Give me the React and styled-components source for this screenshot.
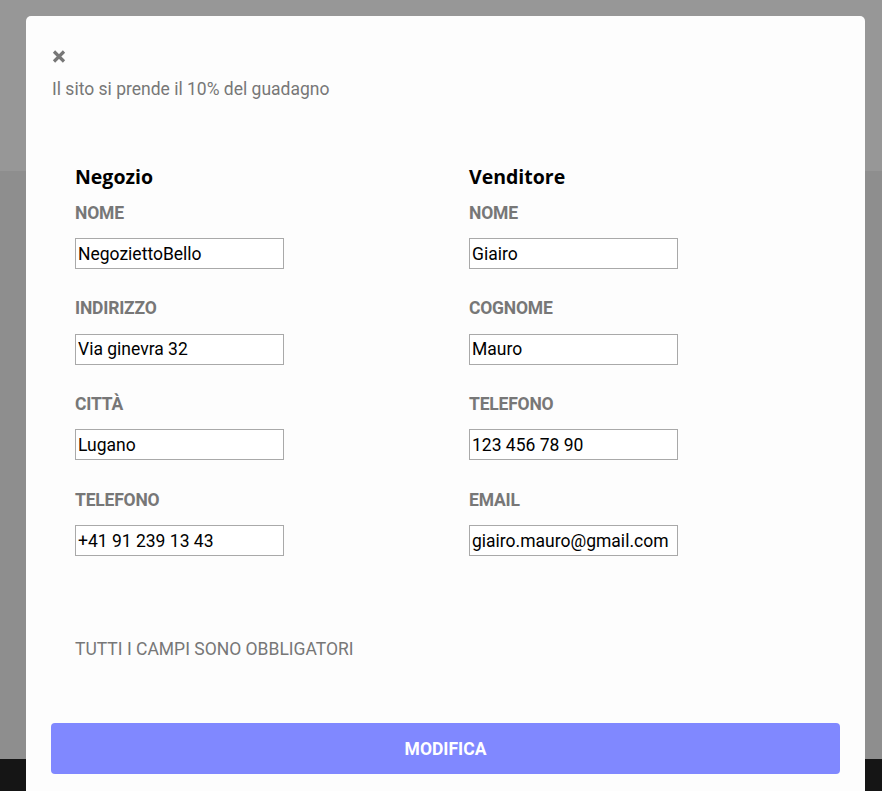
import React from "react"
import styled, { createGlobalStyle } from "styled-components"

const GlobalStyle = createGlobalStyle`
	html, body {
		margin: 0;
		padding: 0;
		height: 100%;
		overflow: hidden;
	}
	body {
		font-family: Roboto, "Liberation Sans", sans-serif;
	}
`

const negozio = [
	{ label: "NOME", value: "NegoziettoBello" },
	{ label: "INDIRIZZO", value: "Via ginevra 32" },
	{ label: "CITTÀ", value: "Lugano" },
	{ label: "TELEFONO", value: "+41 91 239 13 43" },
]

const venditore = [
	{ label: "NOME", value: "Giairo" },
	{ label: "COGNOME", value: "Mauro" },
	{ label: "TELEFONO", value: "123 456 78 90" },
	{ label: "EMAIL", value: "giairo.mauro@gmail.com" },
]

const Column = ({ title, fields }) => (
	<Col>
		<Heading>{title}</Heading>
		{fields.map(f =>
			<Field key={f.label}>
				<Label>{f.label}</Label>
				<Input defaultValue={f.value} />
			</Field>)}
	</Col>
)

const App = () => {
	return (
		<Page>
			<GlobalStyle />
			<Header />
			<Main />
			<Footer />
			<Overlay>
				<Modal>
					<Close aria-label="chiudi">
						<svg width="14" height="13" viewBox="0 0 14 13">
							<path d="M2 1.5 L12 11.5 M12 1.5 L2 11.5" stroke="#777" strokeWidth="3.2" />
						</svg>
					</Close>
					<Subtitle>Il sito si prende il 10% del guadagno</Subtitle>
					<Form>
						<Column title="Negozio" fields={negozio} />
						<Column title="Venditore" fields={venditore} />
					</Form>
					<Note>TUTTI I CAMPI SONO OBBLIGATORI</Note>
					<Submit>MODIFICA</Submit>
				</Modal>
			</Overlay>
		</Page>
	)
}

const Page = styled.div`
	display: flex;
	flex-direction: column;
	height: 100vh;
	position: relative;
`
const Header = styled.div`
	height: 171px;
	background: #fcfcfc;
`
const Main = styled.div`
	flex: 1;
	background: #ededed;
`
const Footer = styled.div`
	height: 32px;
	background: #232323;
`
const Overlay = styled.div`
	position: absolute;
	inset: 0;
	background: rgba(0, 0, 0, 0.4);
`
const Modal = styled.div`
	margin: 16px 0 0 26px;
	width: 839px;
	background: #fdfdfd;
	border-radius: 5px;
	padding: 34px 25px 40px;
	box-sizing: border-box;
	display: flex;
	flex-direction: column;
`
const Close = styled.button`
	align-self: flex-start;
	border: none;
	background: none;
	padding: 0;
	margin: 0 0 0 1px;
	height: 13px;
	line-height: 0;
	cursor: pointer;
`
const Subtitle = styled.div`
	margin-top: 15.5px;
	margin-left: 1px;
	font-size: 17.5px;
	line-height: 20px;
	color: #777;
`
const Form = styled.div`
	display: grid;
	grid-template-columns: 394px 394px;
	padding: 0 24px;
	margin-top: 66px;
`
const Col = styled.div`
	display: flex;
	flex-direction: column;
	gap: 29.17px;
`
const Heading = styled.div`
	font-family: "Open Sans", "Noto Sans", sans-serif;
	font-weight: 700;
	font-size: 19.5px;
	line-height: 24px;
	color: #000;
	margin-bottom: -15.1px;
`
const Field = styled.div`
	display: flex;
	flex-direction: column;
	gap: 15.5px;
`
const Label = styled.div`
	font-size: 17.5px;
	font-weight: 700;
	line-height: 20px;
	color: #777;
	letter-spacing: -0.2px;
`
const Input = styled.input`
	width: 209px;
	height: 31px;
	box-sizing: border-box;
	border: 1px solid #a9a9a9;
	padding: 0 2px;
	font-family: Roboto, "Liberation Sans", sans-serif;
	font-size: 17.5px;
	color: #000;
	background: #fff;
	outline: none;
`
const Note = styled.div`
	margin: 82.5px 0 0 24px;
	font-size: 17.5px;
	line-height: 20px;
	color: #777;
`
const Submit = styled.button`
	margin-top: 64.5px;
	height: 51px;
	border: none;
	border-radius: 4px;
	background: #8088ff;
	color: #fff;
	font-family: Roboto, "Liberation Sans", sans-serif;
	font-size: 17.5px;
	font-weight: 700;
	cursor: pointer;
`

export default App
